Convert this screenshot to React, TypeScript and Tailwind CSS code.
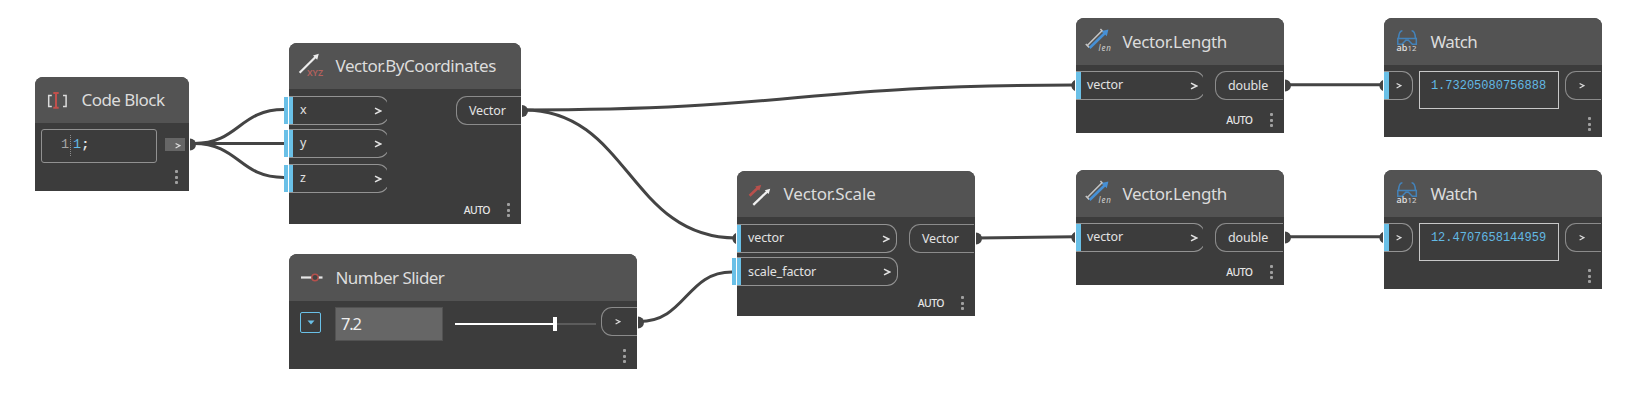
import React from "react";

const SANS = "font-['Noto_Sans','Open_Sans',sans-serif]";
const MONO = "font-['Liberation_Mono','DejaVu_Sans_Mono',monospace]";

function Icon({ children }: { children: React.ReactNode }) {
  return (
    <svg viewBox="8 0 36 46" className="h-[46px] w-9 shrink-0" fill="none">
      {children}
    </svg>
  );
}

const CodeIcon = () => (
  <Icon>
    <path d="M16.800 18.600H13.700v10.800h3.100M28 18.600h3.100v10.800H28" stroke="#dcdcdc" strokeWidth="1.500" />
    <path d="M18.300 16h5.400M18.300 30.800h5.400M21 16v14.800" stroke="#c1504c" strokeWidth="2" />
  </Icon>
);

const CoordinatesIcon = () => (
  <Icon>
    <path d="M10.600 29.800 27 13.500" stroke="#ececec" strokeWidth="2.200" />
    <path d="m24 12.500 5.800-1.700-1.600 5.900Z" fill="#ececec" />
    <text x="18" y="32.600" fontSize="8.500" fontWeight="600" textLength="16" lengthAdjust="spacingAndGlyphs" fill="#b5615d" fontFamily="Noto Sans, sans-serif">XYZ</text>
  </Icon>
);

const SliderIcon = () => (
  <Icon>
    <path d="M12 23.500h21.500" stroke="#e6e6e6" strokeWidth="2.200" />
    <circle cx="26" cy="23.500" r="3.200" fill="#444" stroke="#b5504c" strokeWidth="1.400" />
  </Icon>
);

const ScaleIcon = () => (
  <Icon>
    <path d="m12.600 24.800 8.700-8.300" stroke="#b9504c" strokeWidth="2.600" />
    <path d="m18.200 15.600 6-1.600-1.900 5.800Z" fill="#b9504c" />
    <path d="m16.300 33.800 14.200-13.500" stroke="#f0f0f0" strokeWidth="2.300" />
    <path d="m27.800 19.200 5.400-1.400-1.500 5.300Z" fill="#f0f0f0" />
  </Icon>
);

const LengthIcon = () => (
  <Icon>
    <path d="M11.300 27.500 26 12.700M9.800 26l3.400 3.400M24.400 11l3.200 3.200" stroke="#c4c4c4" strokeWidth="1.600" />
    <path d="M13.600 30 29 15" stroke="#4690d6" strokeWidth="2.600" />
    <path d="m25.800 13 6.600-1.600-1.600 6.800Z" fill="#4690d6" />
    <text x="22.400" y="32.600" fontSize="8" fontStyle="italic" textLength="12.600" fill="#cfcfcf" fontFamily="Noto Sans, sans-serif">len</text>
  </Icon>
);

const WatchIcon = () => (
  <Icon>
    <path d="M18.400 12.700c-2.600 0-3.600 3.300-3.900 7.700M27.600 12.700c2.600 0 3.600 3.300 3.900 7.700M13.800 20.600h18.500v5.700h-4l-3.900-4h-2.600l-3.900 4h-4.100Z" stroke="#4382b9" strokeWidth="1.500" />
    <text x="12.600" y="32.600" fontSize="9" fontWeight="500" textLength="10.800" lengthAdjust="spacingAndGlyphs" fill="#e4e4e4" fontFamily="Noto Sans, sans-serif">ab</text>
    <text x="23.600" y="32.600" fontSize="7.500" textLength="9" lengthAdjust="spacingAndGlyphs" fill="#d6d6d6" fontFamily="Noto Sans, sans-serif">12</text>
  </Icon>
);

function Node({ place, header = "h-[47px] leading-[48px]", icon, title, tracking, children }: {
  place: string; header?: string; icon: React.ReactNode; title: string; tracking: string; children: React.ReactNode;
}) {
  return (
    <section className={`absolute flex flex-col rounded-t-lg bg-[#3c3c3c] ${place}`}>
      <header className={`flex shrink-0 items-start rounded-t-lg bg-[#535353] pl-2 text-[17px] text-[#dcdcdc] ${header}`}>
        {icon}
        <h2 className={`ml-[2.5px] whitespace-nowrap ${tracking}`}>{title}</h2>
      </header>
      {children}
    </section>
  );
}

function Chevron({ className = "" }: { className?: string }) {
  return (
    <svg viewBox="0 0 8 10" className={`h-[10px] w-2 shrink-0 ${className}`} fill="none">
      <path d="M1 2.200 6.600 5 1 7.800" stroke="#e2e2e2" strokeWidth="1.500" />
    </svg>
  );
}

function SmallChevron({ className = "" }: { className?: string }) {
  return (
    <svg viewBox="0 0 6 8" className={`h-2 w-[6px] shrink-0 ${className}`} fill="none">
      <path d="M.6 1.500 4.900 3.700.6 6" stroke="#dcdcdc" strokeWidth="1.300" />
    </svg>
  );
}

function Input({ label, width, body = "w-full", text = "ml-[7px]", bar = "w-1", loose = false }: {
  label: string; width: string; body?: string; text?: string; bar?: string; loose?: boolean;
}) {
  return (
    <div className={`relative h-[29px] ${width}`}>
      {loose && <span className="absolute -left-[5px] top-px h-[27px] w-1 bg-[#6ac0e7]" />}
      <div className="h-full overflow-hidden">
        <div className={`flex h-full items-center rounded-r-[11px] border-y border-r border-[#939393] ${body}`}>
          <span className={`h-[27px] shrink-0 bg-[#6ac0e7] ${bar}`} />
          <span className={`flex-1 text-[12.5px] leading-none tracking-[-0.1px] text-[#e2e2e2] ${text}`}>{label}</span>
          <Chevron className="mr-[6px] mt-px" />
        </div>
      </div>
    </div>
  );
}

function Output({ label, width }: { label: string; width: string }) {
  return (
    <div className={`flex h-[29px] items-center rounded-l-[11px] border-y border-l border-[#8b8b8b] pl-3 pt-px text-[12.5px] leading-none tracking-[-0.15px] text-[#e2e2e2] ${width}`}>
      {label}
    </div>
  );
}

function Dots() {
  return (
    <span className="flex flex-col gap-[2.5px]">
      <i className="size-[3px] rounded-[1px] bg-[#a0a0a0]" />
      <i className="size-[3px] rounded-[1px] bg-[#a0a0a0]" />
      <i className="size-[3px] rounded-[1px] bg-[#a0a0a0]" />
    </span>
  );
}

function Footer({ auto = false, className }: { auto?: boolean; className: string }) {
  return (
    <footer className={`mt-auto flex items-center justify-end ${className}`}>
      {auto && <span className="mr-[17px] text-[10.5px] font-medium leading-none tracking-[-0.6px] text-[#e6e6e6]">AUTO</span>}
      <Dots />
    </footer>
  );
}

function LengthNode({ place }: { place: string }) {
  return (
    <Node place={place} icon={<LengthIcon />} title="Vector.Length" tracking="tracking-[-0.35px]">
      <div className="flex justify-between pr-px pt-[6px]">
        <Input label="vector" width="w-[127px]" body="w-[129px]" text="ml-[6px]" bar="w-[5px]" />
        <Output label="double" width="w-[68px]" />
      </div>
      <Footer auto className="pb-[6px] pr-[11.5px]" />
    </Node>
  );
}

function WatchNode({ place, value }: { place: string; value: string }) {
  return (
    <Node place={place} icon={<WatchIcon />} title="Watch" tracking="tracking-[-0.65px]">
      <div className="flex items-start justify-between pr-px pt-[6px]">
        <div className="flex h-[29px] w-[29px] items-center rounded-r-[11px] border-y border-r border-[#939393]">
          <span className="h-[27px] w-[5px] bg-[#6ac0e7]" />
          <SmallChevron className="ml-[7px]" />
        </div>
        <output className={`flex h-[38px] w-[140px] justify-center border border-[#c8c8c8] pr-px pt-[7px] text-[12px] leading-[14px] text-[#62b9e4] ${MONO}`}>
          {value}
        </output>
        <div className="flex h-[29px] w-9 items-center rounded-l-[11px] border-y border-l border-[#8b8b8b] pl-[13px]">
          <SmallChevron className="mt-px" />
        </div>
      </div>
      <Footer className="pb-[6px] pr-[11px]" />
    </Node>
  );
}

function Wires() {
  return (
    <svg className="absolute inset-0 h-[416px] w-[1646px]" viewBox="0 0 1646 416">
      <g fill="none" stroke="#444" strokeWidth="3">
        <path d="M194 143.500C239 143.500 239 109.500 284 109.500" />
        <path d="M194 143.500H284" />
        <path d="M194 143.500C239 143.500 239 177.500 284 177.500" />
        <path d="M524 110C798 110 798 85 1074 85" />
        <path d="M524 110C629 110 629 238 736 238" />
        <path d="M639 321.500C686 321.500 686 272 732 272" />
        <path d="M977 238L1074 236.800" />
        <path d="M1287 84.700H1382M1287 236.700H1382" />
      </g>
      <g fill="#444">
        <path d="M190 138.500a6 6 0 0 1 0 12Z" />
        <path d="M522 105a6 6 0 0 1 0 12Z" />
        <path d="M638 316.500a6 6 0 0 1 0 12Z" />
        <path d="M976 232.500a6 6 0 0 1 0 12Z" />
        <path d="M1285 79.500a6 6 0 0 1 0 12ZM1285 231.500a6 6 0 0 1 0 12Z" />
        <path d="M736 233a6 6 0 0 0 0 11Z" />
        <path d="M1075 80a6 6 0 0 0 0 11ZM1075 232a6 6 0 0 0 0 11Z" />
        <path d="M1383 80a6 6 0 0 0 0 11ZM1383 232a6 6 0 0 0 0 11Z" />
      </g>
    </svg>
  );
}

export default function App() {
  return (
    <main className={`relative h-[416px] w-[1646px] overflow-hidden bg-white ${SANS}`}>
      <Wires />

      <Node place="left-[35px] top-[77px] h-[114px] w-[154px]" header="h-[46px] leading-[46px]" icon={<CodeIcon />} title="Code Block" tracking="tracking-[-0.55px]">
        <div className="flex items-start pl-[6px] pt-[6px]">
          <div className={`flex h-[34px] w-[116px] items-start rounded-[3px] border border-[#919191] pl-[19px] pt-[5px] text-[13.5px] leading-[20px] ${MONO}`}>
            <span className="text-[#a5a5a5]">1</span>
            <span className="ml-px h-[21px] border-l border-dotted border-[#8c8c8c]" />
            <span className="ml-[2px] text-[#62b9e4]">1</span>
            <span className="font-bold text-[#e6e6e6]">;</span>
          </div>
          <div className="ml-2 mt-[9px] flex h-[13px] w-5 items-center justify-end bg-[#666] pr-1">
            <SmallChevron className="mt-[2px]" />
          </div>
        </div>
        <Footer className="pb-[7px] pr-[11px]" />
      </Node>

      <Node place="left-[289px] top-[43px] h-[181px] w-[232px]" header="h-[46px] leading-[46px]" icon={<CoordinatesIcon />} title="Vector.ByCoordinates" tracking="tracking-[-0.45px]">
        <div className="flex items-start justify-between pt-[7px]">
          <div className="flex flex-col">
            <Input label="x" width="w-[98px]" body="w-[100px]" loose />
            <div className="h-1" />
            <Input label="y" width="w-[98px]" body="w-[100px]" loose />
            <div className="h-[6px]" />
            <Input label="z" width="w-[98px]" body="w-[100px]" loose />
          </div>
          <Output label="Vector" width="w-[65px]" />
        </div>
        <Footer auto className="pb-[7px] pr-[11px]" />
      </Node>

      <Node place="left-[289px] top-[254px] h-[115px] w-[348px]" icon={<SliderIcon />} title="Number Slider" tracking="tracking-[-0.55px]">
        <div className="flex items-start pl-[11px] pt-[6px]">
          <button className="mt-[5px] flex size-[21px] items-center justify-center rounded-[2px] border-[1.5px] border-[#6ac0e7]">
            <svg viewBox="0 0 8 5" className="h-[5px] w-2"><path d="M.5.5h7L4 4.500Z" fill="#6ac0e7" /></svg>
          </button>
          <div className="ml-[14px] flex h-[34px] w-[108px] items-center border border-[#525252] bg-[#666] pl-[5px] pt-px text-[16.5px] leading-none tracking-[-1.2px] text-[#eee]">7.2</div>
          <div className="ml-3 mt-[10px] flex h-[14px] w-[141px] items-center">
            <span className="h-[2px] w-[98px] bg-white" />
            <span className="h-[14px] w-1 bg-white" />
            <span className="h-[2px] flex-1 bg-[#5c5c5c]" />
          </div>
          <div className="ml-auto flex h-[29px] w-9 items-center rounded-l-[11px] border-y border-l border-[#8b8b8b] pl-[13px]">
            <SmallChevron />
          </div>
        </div>
        <Footer className="pb-[6px] pr-[11px]" />
      </Node>

      <Node place="left-[737px] top-[171px] h-[145px] w-[238px]" header="h-[46px] leading-[46px]" icon={<ScaleIcon />} title="Vector.Scale" tracking="tracking-[-0.15px]">
        <div className="flex items-start justify-between pr-px pt-[7px]">
          <div className="flex flex-col gap-1">
            <Input label="vector" width="w-[160px]" />
            <Input label="scale_factor" width="w-[161px]" text="ml-[7px] pt-px" loose />
          </div>
          <Output label="Vector" width="w-[65px]" />
        </div>
        <Footer auto className="pb-[6px] pr-[11px]" />
      </Node>

      <LengthNode place="left-[1076px] top-[18px] h-[115px] w-[208px]" />
      <LengthNode place="left-[1076px] top-[170px] h-[115px] w-[208px]" />
      <WatchNode place="left-[1384px] top-[18px] h-[119px] w-[218px]" value="1.73205080756888" />
      <WatchNode place="left-[1384px] top-[170px] h-[119px] w-[218px]" value="12.4707658144959" />
    </main>
  );
}
